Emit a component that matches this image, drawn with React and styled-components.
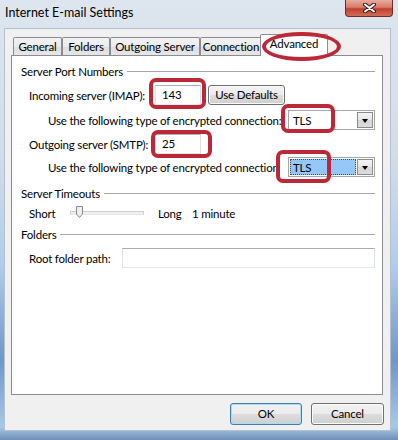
import React from 'react';
import styled, { createGlobalStyle } from 'styled-components';

const GlobalStyle = createGlobalStyle`
    html, body {
        margin: 0;
        padding: 0;
        background: #ffffff;
    }
    body {
        font-family: Lato, "Noto Sans", sans-serif;
        font-size: 11.5px;
        letter-spacing: -0.2px;
        color: #000;
    }
`;

const Window = styled.div`
    position: relative;
    width: 398px;
    height: 440px;
    display: flex;
    flex-direction: column;
    overflow: hidden;
    background: linear-gradient(180deg, #dde6ef 0%, #d2dde9 35%, #b2cdea 60%, #6f97c6 82%, #a9c8e8 97%, #6d8fb8 100%);
`;

const TitleBar = styled.div`
    height: 28px;
    flex: 0 0 28px;
    display: flex;
    align-items: flex-start;
    justify-content: space-between;
    padding-left: 5px;
`;

const Title = styled.div`
    margin-top: 5px;
    font-size: 12.5px;
    letter-spacing: 0;
    line-height: 16px;
`;

const CloseButton = styled.div`
    width: 48px;
    height: 17px;
    margin-right: 5px;
    box-sizing: border-box;
    border: 1px solid #6e2d25;
    border-top: none;
    border-radius: 0 0 4px 4px;
    background: linear-gradient(180deg, #e9ab9d 0%, #d77b6a 45%, #c2402f 55%, #cf6d57 100%);
    display: flex;
    align-items: center;
    justify-content: center;
    padding-bottom: 1px;
`;

const Client = styled.div`
    flex: 1;
    margin: 0 7px 9px 4px;
    background: #f0f0f0;
    border: 1px solid #b4c0ce;
    display: flex;
    flex-direction: column;
    padding: 5px 7px 0 6px;
`;

const TabRow = styled.div`
    display: flex;
    align-items: flex-end;
    height: 21px;
    padding-left: 2px;
`;

const Tab = styled.div`
    box-sizing: border-box;
    width: ${({ $w }) => $w}px;
    height: ${({ $active }) => ($active ? 22 : 18)}px;
    margin-left: ${({ $ml = 0 }) => $ml}px;
    margin-bottom: ${({ $active }) => ($active ? -1 : 0)}px;
    position: relative;
    z-index: ${({ $active }) => ($active ? 1 : 0)};
    border: 1px solid #898c95;
    border-bottom: none;
    border-radius: 2px 2px 0 0;
    background: ${({ $active }) =>
        $active ? '#ffffff' : 'linear-gradient(180deg, #f3f3f3 0%, #ebebeb 50%, #dedede 51%, #e6e6e6 100%)'};
    text-align: center;
    line-height: ${({ $active }) => ($active ? 18 : 17)}px;
    white-space: nowrap;
`;

const Panel = styled.div`
    flex: 0 0 340px;
    box-sizing: border-box;
    background: #ffffff;
    border: 1px solid #898c95;
    padding: 8px 7px 0 9px;
    display: flex;
    flex-direction: column;
`;

const GroupHeader = styled.div`
    display: flex;
    align-items: center;
    gap: 4px;
    height: 14px;
    margin-top: ${({ $mt = 0 }) => $mt}px;
    white-space: nowrap;
    &::after {
        content: '';
        flex: 1;
        height: 1px;
        background: #a7a7a7;
        margin-top: 1px;
    }
`;

const Row = styled.div`
    display: flex;
    align-items: center;
    height: ${({ $h = 20 }) => $h}px;
    margin-top: ${({ $mt = 0 }) => $mt}px;
    padding-left: ${({ $indent = 8 }) => $indent}px;
    white-space: nowrap;
`;

const Label = styled.div`
    flex: 0 0 ${({ $w }) => $w}px;
`;

const TextBox = styled.div`
    box-sizing: border-box;
    width: ${({ $w }) => ($w ? `${$w}px` : 'auto')};
    flex: ${({ $w }) => ($w ? '0 0 auto' : '1')};
    height: 20px;
    border: 1px solid;
    border-color: #abadb3 #dbdfe6 #e3e9ef #e2e3ea;
    background: #fff;
    padding-left: 6px;
    line-height: 18px;
`;

const Button = styled.div`
    box-sizing: border-box;
    width: ${({ $w }) => $w}px;
    height: ${({ $h = 22 }) => $h}px;
    margin-left: ${({ $ml = 0 }) => $ml}px;
    border: 1px solid ${({ $default }) => ($default ? '#3c7fb1' : '#707070')};
    border-radius: 3px;
    box-shadow: inset 0 0 0 1px ${({ $default }) => ($default ? '#a9dcf6' : '#fbfbfb')};
    background: linear-gradient(180deg, #f2f2f2 0%, #ebebeb 50%, #dddddd 51%, #cfcfcf 100%);
    display: flex;
    align-items: center;
    justify-content: center;
    padding-bottom: 1px;
`;

const Select = styled.div`
    box-sizing: border-box;
    width: 87px;
    height: 20px;
    border: 1px solid #a5a5a5;
    background: #fff;
    display: flex;
    align-items: stretch;
    padding: 1px;
`;

const SelectValue = styled.div`
    flex: 1;
    box-sizing: border-box;
    padding-left: 2px;
    line-height: 16px;
    background: ${({ $focused }) => ($focused ? '#95c7f8' : 'transparent')};
    border: 1px ${({ $focused }) => ($focused ? 'dotted #5e4a2a' : 'solid transparent')};
    margin-right: 1px;
`;

const DropButton = styled.div`
    box-sizing: border-box;
    width: 16px;
    border: 1px solid #8a8a8a;
    background: linear-gradient(180deg, #f4f4f4 0%, #e6e6e6 50%, #d6d6d6 51%, #dcdcdc 100%);
    display: flex;
    align-items: center;
    justify-content: center;
    &::after {
        content: '';
        width: 0;
        height: 0;
        border-left: 3.5px solid transparent;
        border-right: 3.5px solid transparent;
        border-top: 4px solid #000;
        margin-top: 1px;
    }
`;

const Track = styled.div`
    position: relative;
    box-sizing: border-box;
    flex: 0 0 74px;
    height: 4px;
    border: 1px solid #cfcfcf;
    border-bottom-color: #e6e6e6;
    background: #eef0f1;
    margin-right: 14px;
`;

const Thumb = styled.svg`
    position: absolute;
    left: 5px;
    top: -6px;
`;

const ButtonRow = styled.div`
    display: flex;
    justify-content: flex-end;
    padding-top: 8px;
    gap: 9px;
    margin-right: -1px;
`;

const Mark = styled.div`
    position: absolute;
    box-sizing: border-box;
    left: ${({ $x }) => $x}px;
    top: ${({ $y }) => $y}px;
    width: ${({ $w }) => $w}px;
    height: ${({ $h }) => $h}px;
    border: 4px solid #bd2838;
    border-radius: ${({ $r = 7 }) => (typeof $r === 'number' ? `${$r}px` : $r)};
    pointer-events: none;
    z-index: 5;
`;

function EncryptionRow({ mt, label, focused }) {
    return (
        <Row $mt={mt} $indent={27}>
            <Label $w={240}>{label}</Label>
            <Select>
                <SelectValue $focused={focused}>TLS</SelectValue>
                <DropButton />
            </Select>
        </Row>
    );
}

export default function App() {
    return (
        <>
            <GlobalStyle />
            <Window>
                <TitleBar>
                    <Title>Internet E-mail Settings</Title>
                    <CloseButton>
                        <svg width="13" height="10" viewBox="0 0 13 10">
                            <path d="M2 1.5 L11 8.5 M11 1.5 L2 8.5" stroke="#3d1d17" strokeWidth="4" strokeLinecap="round" />
                            <path d="M2 1.5 L11 8.5 M11 1.5 L2 8.5" stroke="#ffffff" strokeWidth="2" strokeLinecap="round" />
                        </svg>
                    </CloseButton>
                </TitleBar>
                <Client>
                    <TabRow>
                        <Tab $w={49}>General</Tab>
                        <Tab $w={48}>Folders</Tab>
                        <Tab $w={90}>Outgoing Server</Tab>
                        <Tab $w={62}>Connection</Tab>
                        <Tab $w={68} $ml={-2} $active>Advanced</Tab>
                    </TabRow>
                    <Panel>
                        <GroupHeader>Server Port Numbers</GroupHeader>
                        <Row $mt={7}>
                            <Label $w={126}>Incoming server (IMAP):</Label>
                            <TextBox $w={46}>143</TextBox>
                            <Button $w={77} $h={20} $ml={7}>Use Defaults</Button>
                        </Row>
                        <EncryptionRow mt={5} label="Use the following type of encrypted connection:" />
                        <Row $mt={4}>
                            <Label $w={126}>Outgoing server (SMTP):</Label>
                            <TextBox $w={46}>25</TextBox>
                        </Row>
                        <EncryptionRow mt={3} label="Use the following type of encrypted connection" focused />
                        <GroupHeader $mt={9}>Server Timeouts</GroupHeader>
                        <Row $mt={6} $h={14}>
                            <Label $w={41}>Short</Label>
                            <Track>
                                <Thumb width="7" height="12" viewBox="0 0 7 12">
                                    <path d="M0.5 0.5 H6.5 V8 L3.5 11.5 L0.5 8 Z" fill="#eeeeee" stroke="#8b8b8b" />
                                </Thumb>
                            </Track>
                            <Label $w={34}>Long</Label>
                            <span>1 minute</span>
                        </Row>
                        <GroupHeader $mt={7}>Folders</GroupHeader>
                        <Row $mt={7}>
                            <Label $w={93}>Root folder path:</Label>
                            <TextBox />
                        </Row>
                    </Panel>
                    <ButtonRow>
                        <Button $w={72} $default>OK</Button>
                        <Button $w={73}>Cancel</Button>
                    </ButtonRow>
                </Client>
                <Mark $x={262} $y={32} $w={79} $h={29} $r="50%" />
                <Mark $x={149} $y={78} $w={57} $h={31} />
                <Mark $x={281} $y={104} $w={54} $h={29} />
                <Mark $x={151} $y={130} $w={61} $h={28} />
                <Mark $x={276} $y={150} $w={55} $h={33} />
            </Window>
        </>
    );
}
